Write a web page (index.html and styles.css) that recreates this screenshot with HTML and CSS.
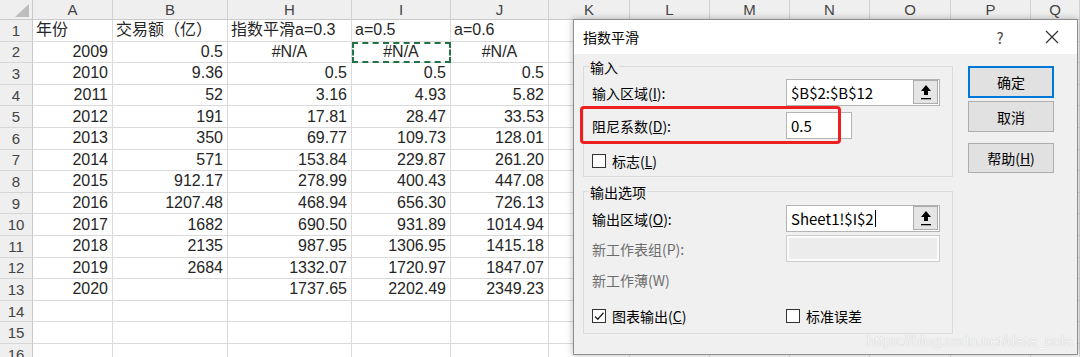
FILE: index.html
```html
<!DOCTYPE html>
<html lang="zh-CN">
<head>
<meta charset="utf-8">
<title>指数平滑</title>
<link rel="stylesheet" href="styles.css">
</head>
<body>
<div class="sheet">
  <div class="corner"><svg width="16" height="14" viewBox="0 0 16 14"><polygon points="15,0 15,13 1,13" fill="#bdbdbd"/></svg></div>
  <div class="ch">A</div><div class="ch">B</div><div class="ch">H</div><div class="ch">I</div><div class="ch">J</div><div class="ch">K</div><div class="ch">L</div><div class="ch">M</div><div class="ch">N</div><div class="ch">O</div><div class="ch">P</div><div class="ch">Q</div>

  <div class="rh">1</div><div class="c l">年份</div><div class="c l">交易额（亿）</div><div class="c l">指数平滑a=0.3</div><div class="c l">a=0.5</div><div class="c l">a=0.6</div><div class="c"></div><div class="c"></div><div class="c"></div><div class="c"></div><div class="c"></div><div class="c"></div><div class="c"></div>
  <div class="rh">2</div><div class="c n">2009</div><div class="c n">0.5</div><div class="c m">#N/A</div><div class="c m sel">#N/A</div><div class="c m">#N/A</div><div class="c"></div><div class="c"></div><div class="c"></div><div class="c"></div><div class="c"></div><div class="c"></div><div class="c"></div>
  <div class="rh">3</div><div class="c n">2010</div><div class="c n">9.36</div><div class="c n">0.5</div><div class="c n">0.5</div><div class="c n">0.5</div><div class="c"></div><div class="c"></div><div class="c"></div><div class="c"></div><div class="c"></div><div class="c"></div><div class="c"></div>
  <div class="rh">4</div><div class="c n">2011</div><div class="c n">52</div><div class="c n">3.16</div><div class="c n">4.93</div><div class="c n">5.82</div><div class="c"></div><div class="c"></div><div class="c"></div><div class="c"></div><div class="c"></div><div class="c"></div><div class="c"></div>
  <div class="rh">5</div><div class="c n">2012</div><div class="c n">191</div><div class="c n">17.81</div><div class="c n">28.47</div><div class="c n">33.53</div><div class="c"></div><div class="c"></div><div class="c"></div><div class="c"></div><div class="c"></div><div class="c"></div><div class="c"></div>
  <div class="rh">6</div><div class="c n">2013</div><div class="c n">350</div><div class="c n">69.77</div><div class="c n">109.73</div><div class="c n">128.01</div><div class="c"></div><div class="c"></div><div class="c"></div><div class="c"></div><div class="c"></div><div class="c"></div><div class="c"></div>
  <div class="rh">7</div><div class="c n">2014</div><div class="c n">571</div><div class="c n">153.84</div><div class="c n">229.87</div><div class="c n">261.20</div><div class="c"></div><div class="c"></div><div class="c"></div><div class="c"></div><div class="c"></div><div class="c"></div><div class="c"></div>
  <div class="rh">8</div><div class="c n">2015</div><div class="c n">912.17</div><div class="c n">278.99</div><div class="c n">400.43</div><div class="c n">447.08</div><div class="c"></div><div class="c"></div><div class="c"></div><div class="c"></div><div class="c"></div><div class="c"></div><div class="c"></div>
  <div class="rh">9</div><div class="c n">2016</div><div class="c n">1207.48</div><div class="c n">468.94</div><div class="c n">656.30</div><div class="c n">726.13</div><div class="c"></div><div class="c"></div><div class="c"></div><div class="c"></div><div class="c"></div><div class="c"></div><div class="c"></div>
  <div class="rh">10</div><div class="c n">2017</div><div class="c n">1682</div><div class="c n">690.50</div><div class="c n">931.89</div><div class="c n">1014.94</div><div class="c"></div><div class="c"></div><div class="c"></div><div class="c"></div><div class="c"></div><div class="c"></div><div class="c"></div>
  <div class="rh">11</div><div class="c n">2018</div><div class="c n">2135</div><div class="c n">987.95</div><div class="c n">1306.95</div><div class="c n">1415.18</div><div class="c"></div><div class="c"></div><div class="c"></div><div class="c"></div><div class="c"></div><div class="c"></div><div class="c"></div>
  <div class="rh">12</div><div class="c n">2019</div><div class="c n">2684</div><div class="c n">1332.07</div><div class="c n">1720.97</div><div class="c n">1847.07</div><div class="c"></div><div class="c"></div><div class="c"></div><div class="c"></div><div class="c"></div><div class="c"></div><div class="c"></div>
  <div class="rh">13</div><div class="c n">2020</div><div class="c n"></div><div class="c n">1737.65</div><div class="c n">2202.49</div><div class="c n">2349.23</div><div class="c"></div><div class="c"></div><div class="c"></div><div class="c"></div><div class="c"></div><div class="c"></div><div class="c"></div>
  <div class="rh">14</div><div class="c"></div><div class="c"></div><div class="c"></div><div class="c"></div><div class="c"></div><div class="c"></div><div class="c"></div><div class="c"></div><div class="c"></div><div class="c"></div><div class="c"></div><div class="c"></div>
  <div class="rh">15</div><div class="c"></div><div class="c"></div><div class="c"></div><div class="c"></div><div class="c"></div><div class="c"></div><div class="c"></div><div class="c"></div><div class="c"></div><div class="c"></div><div class="c"></div><div class="c"></div>
  <div class="rh">16</div><div class="c"></div><div class="c"></div><div class="c"></div><div class="c"></div><div class="c"></div><div class="c"></div><div class="c"></div><div class="c"></div><div class="c"></div><div class="c"></div><div class="c"></div><div class="c"></div>
</div>

<div class="dialog">
  <div class="titlebar">
    <span class="title">指数平滑</span>
    <span class="help">?</span>
    <span class="close"><svg width="14" height="14" viewBox="0 0 14 14"><path d="M1 1L13 13M13 1L1 13" stroke="#333" stroke-width="1.2"/></svg></span>
  </div>
  <div class="body">
    <div class="left">
      <div class="group g1">
        <div class="legend">输入</div>
        <div class="row r1">
          <span class="lab">输入区域(<u>I</u>):</span>
          <div class="field wide"><span class="val">$B$2:$B$12</span><span class="pick"><svg width="12" height="16" viewBox="0 0 12 16"><polygon points="6,1 1,7 4,7 4,11 8,11 8,7 11,7" fill="#000"/><rect x="1" y="14" width="10" height="1.3" fill="#000"/></svg></span></div>
        </div>
        <div class="row r2">
          <span class="lab">阻尼系数(<u>D</u>):</span>
          <div class="field narrow"><span class="val">0.5</span></div>
        </div>
        <div class="row r3">
          <span class="cb"></span><span class="cbl">标志(<u>L</u>)</span>
        </div>
      </div>
      <div class="group g2">
        <div class="legend">输出选项</div>
        <div class="row o1">
          <span class="lab">输出区域(<u>O</u>):</span>
          <div class="field wide"><span class="val">Sheet1!$I$2<span class="caret"></span></span><span class="pick"><svg width="12" height="16" viewBox="0 0 12 16"><polygon points="6,1 1,7 4,7 4,11 8,11 8,7 11,7" fill="#000"/><rect x="1" y="14" width="10" height="1.3" fill="#000"/></svg></span></div>
        </div>
        <div class="row o2">
          <span class="lab dis">新工作表组(P):</span>
          <div class="field wide disabled"></div>
        </div>
        <div class="row o3">
          <span class="lab dis">新工作薄(W)</span>
        </div>
        <div class="row o4">
          <div class="half"><span class="cb checked"><svg width="12" height="12" viewBox="0 0 12 12"><path d="M2 6.5L4.8 9.2L10.5 2.8" fill="none" stroke="#222" stroke-width="1.3"/></svg></span><span class="cbl">图表输出(<u>C</u>)</span></div>
          <div class="half2"><span class="cb"></span><span class="cbl">标准误差</span></div>
        </div>
      </div>
    </div>
    <div class="buttons">
      <div class="btn primary">确定</div>
      <div class="btn b2">取消</div>
      <div class="btn b3">帮助(<u>H</u>)</div>
    </div>
  </div>
  <div class="redbox"></div>
  <div class="watermark">https://blog.csdn.net/data_cola</div>
</div>
</body>
</html>
```
FILE: styles.css
```css
* { box-sizing: border-box; }
html, body { margin: 0; padding: 0; }
body {
  width: 1080px;
  height: 357px;
  overflow: hidden;
  background: #fff;
  position: relative;
  font-family: "Noto Sans CJK SC", "Noto Sans", sans-serif;
}
.sheet {
  display: grid;
  grid-template-columns: 33px 80px 115px 124px 99px 98px 81px 80px 80px 80px 81px 80px 49px;
  grid-template-rows: 20px repeat(16, 21.6px);
  font-family: "Liberation Sans", "Noto Sans CJK SC", sans-serif;
  font-size: 16px;
  color: #262626;
}
.corner {
  background: #efefef;
  border-right: 1px solid #c9c9c9;
  border-bottom: 1px solid #c9c9c9;
  display: flex;
  align-items: flex-end;
  justify-content: flex-end;
  padding: 0 2px 1px 0;
}
.ch {
  background: #efefef;
  border-right: 1px solid #d2d2d2;
  border-bottom: 1px solid #c9c9c9;
  color: #444;
  font-size: 15px;
  display: flex;
  align-items: center;
  justify-content: center;
  line-height: 1;
}
.rh {
  background: #efefef;
  border-right: 1px solid #c9c9c9;
  border-bottom: 1px solid #d6d6d6;
  color: #444;
  font-size: 15px;
  display: flex;
  align-items: center;
  justify-content: center;
  line-height: 1;
}
.c {
  border-right: 1px solid #dadada;
  border-bottom: 1px solid #dadada;
  display: flex;
  align-items: center;
  padding: 0 4px;
  white-space: nowrap;
  line-height: 1;
}
.n { justify-content: flex-end; }
.l { justify-content: flex-start; padding-left: 3px; }
.m { justify-content: center; }
.sel {
  outline: 2px dashed #217346;
  outline-offset: -2px;
}

.dialog {
  position: absolute;
  left: 573px;
  top: 19px;
  width: 505px;
  height: 336px;
  background: #f0f0f0;
  border: 1px solid #8e8e8e;
  box-shadow: 0 0 7px rgba(0,0,0,0.28);
  font-size: 14px;
  color: #000;
}
.titlebar {
  height: 34px;
  background: #fff;
  display: flex;
  align-items: center;
  padding-left: 9px;
}
.title { flex: 1; font-size: 14px; }
.help { width: 18px; text-align: center; color: #444; font-size: 15px; margin-right: 36px; }
.close { width: 14px; height: 14px; margin-right: 18px; display: flex; }
.body {
  display: flex;
  padding: 12px 0 0 9px;
  gap: 15px;
}
.left { width: 370px; display: flex; flex-direction: column; }
.group {
  border: 1px solid #dcdcdc;
  display: flex;
  flex-direction: column;
}
.g1 { height: 111px; }
.g2 { height: 143px; margin-top: 14px; }
.legend {
  height: 18px;
  line-height: 18px;
  margin: -9px 0 0 5px;
  padding: 0 1px;
  align-self: flex-start;
  background: #f0f0f0;
}
.row { display: flex; align-items: center; padding-left: 8px; }
.r1 { margin-top: 3px; height: 27px; }
.r2 { margin-top: 6px; height: 27px; }
.r3 { margin-top: 12px; height: 20px; }
.o1 { margin-top: 4px; height: 27px; }
.o2 { margin-top: 3px; height: 27px; }
.o3 { margin-top: 8px; height: 20px; }
.o4 { margin-top: 16px; height: 20px; }
.lab { width: 194px; white-space: nowrap; }
.dis { color: #6d6d6d; }
.field {
  height: 27px;
  background: #fff;
  border: 1px solid #b4b4b4;
  display: flex;
  align-items: stretch;
}
.wide { width: 154px; }
.narrow { width: 66px; }
.val {
  flex: 1;
  display: flex;
  align-items: center;
  padding-left: 4px;
  font-size: 15px;
  white-space: nowrap;
}
.caret { display: inline-block; width: 1px; height: 17px; background: #000; margin-left: 1px; }
.pick {
  width: 25px;
  background: #e5e5e5;
  border: 1px solid #adadad;
  margin: 0 1px 1px 0;
  display: flex;
  align-items: center;
  justify-content: center;
}
.disabled {
  background: #ececec;
  border-color: #cdcdcd;
  box-shadow: inset 0 0 0 2px #fbfbfb;
}
.cb {
  width: 14px;
  height: 14px;
  background: #fff;
  border: 1px solid #333;
  display: flex;
  align-items: center;
  justify-content: center;
  flex: none;
}
.cbl { margin-left: 6px; white-space: nowrap; }
.half { width: 194px; display: flex; align-items: center; }
.half2 { display: flex; align-items: center; }
.buttons { width: 86px; display: flex; flex-direction: column; }
.btn {
  background: #e1e1e1;
  border: 1px solid #adadad;
  display: flex;
  align-items: center;
  justify-content: center;
  height: 31px;
}
.primary { height: 32px; border-color: #0078d7; box-shadow: inset 0 0 0 1px #0078d7; }
.b2 { margin-top: 3px; }
.b3 { margin-top: 11px; height: 30px; }
.redbox {
  position: absolute;
  left: 6px;
  top: 86px;
  width: 261px;
  height: 38px;
  border: 3px solid #ee1f1f;
  border-radius: 4px;
}
.watermark {
  position: absolute;
  right: 4px;
  bottom: 5px;
  font-family: "Liberation Sans", Arial, sans-serif;
  font-size: 15px;
  color: #f7f7f7;
  text-shadow: 0 0 1px #b8b8b8;
  letter-spacing: 0.1px;
}
```
